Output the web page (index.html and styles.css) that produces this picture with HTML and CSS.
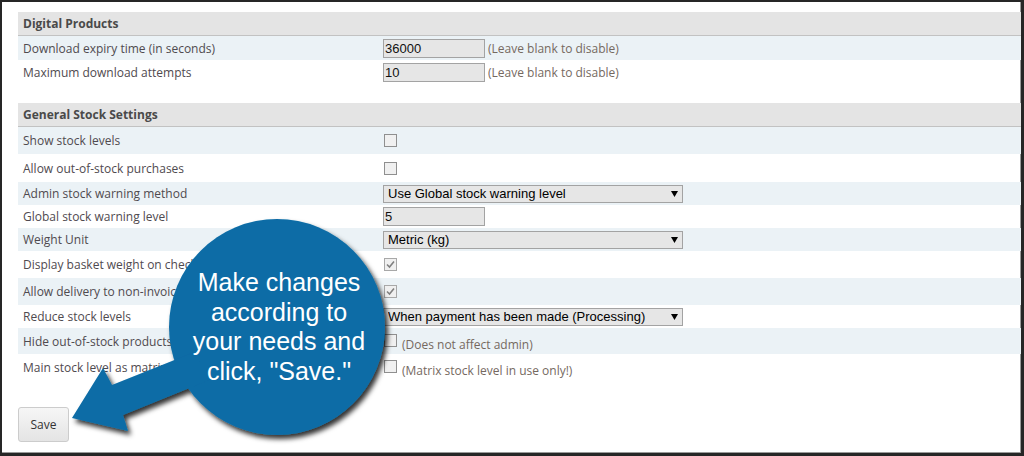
FILE: index.html
```html
<!DOCTYPE html>
<html>
<head>
    <title>Stock Settings</title>
    <link rel="stylesheet" href="styles.css">
</head>
<body>
    <div class="frame">
        <div class="settings">
            <div class="section">
                <div class="section-title">Digital Products</div>
                <div class="row mid alt">
                    <div class="label">Download expiry time (in seconds)</div>
                    <div class="field"><input class="text" type="text" value="36000"><span class="hint">(Leave blank to disable)</span></div>
                </div>
                <div class="row mid">
                    <div class="label">Maximum download attempts</div>
                    <div class="field"><input class="text" type="text" value="10"><span class="hint">(Leave blank to disable)</span></div>
                </div>
            </div>

            <div class="section">
                <div class="section-title">General Stock Settings</div>
                <div class="row tall alt">
                    <div class="label">Show stock levels</div>
                    <div class="field"><input class="check" type="checkbox"></div>
                </div>
                <div class="row roomy">
                    <div class="label">Allow out-of-stock purchases</div>
                    <div class="field"><input class="check" type="checkbox"></div>
                </div>
                <div class="row alt">
                    <div class="label">Admin stock warning method</div>
                    <div class="field">
                        <select class="pick">
                            <option>Use Global stock warning level</option>
                            <option>Use product stock warning level</option>
                        </select>
                    </div>
                </div>
                <div class="row">
                    <div class="label">Global stock warning level</div>
                    <div class="field"><input class="text" type="text" value="5"></div>
                </div>
                <div class="row alt">
                    <div class="label">Weight Unit</div>
                    <div class="field">
                        <select class="pick">
                            <option>Metric (kg)</option>
                            <option>Imperial (lb)</option>
                        </select>
                    </div>
                </div>
                <div class="row tall">
                    <div class="label">Display basket weight on checkout</div>
                    <div class="field"><input class="check" type="checkbox" checked></div>
                </div>
                <div class="row tall alt">
                    <div class="label">Allow delivery to non-invoice address</div>
                    <div class="field"><input class="check" type="checkbox" checked></div>
                </div>
                <div class="row">
                    <div class="label">Reduce stock levels</div>
                    <div class="field">
                        <select class="pick">
                            <option>When payment has been made (Processing)</option>
                            <option>When order is placed</option>
                        </select>
                    </div>
                </div>
                <div class="row snug alt">
                    <div class="label">Hide out-of-stock products</div>
                    <div class="field"><input class="check low" type="checkbox"><span class="hint note">(Does not affect admin)</span></div>
                </div>
                <div class="row tall">
                    <div class="label">Main stock level as matrix total</div>
                    <div class="field"><input class="check low" type="checkbox"><span class="hint note">(Matrix stock level in use only!)</span></div>
                </div>
            </div>

            <button class="save">Save</button>
        </div>

        <svg class="callout" width="1024" height="456" viewBox="0 0 1024 456">
            <defs>
                <filter id="shadow" x="-20%" y="-20%" width="140%" height="140%">
                    <feDropShadow dx="3" dy="4" stdDeviation="2.5" flood-color="#000" flood-opacity="0.8"/>
                </filter>
            </defs>
            <g filter="url(#shadow)" fill="#0a6ca6">
                <circle cx="277" cy="327" r="108"/>
                <polygon points="192,353 112,385 103,368 72,418 128,431 123,415 214,378"/>
            </g>
            <text class="callout-text" x="279" y="291">Make changes</text>
            <text class="callout-text" x="279" y="321">according to</text>
            <text class="callout-text" x="279" y="350">your needs and</text>
            <text class="callout-text" x="279" y="380">click, "Save."</text>
        </svg>
    </div>
</body>
</html>
```

FILE: styles.css
```css
body {
    margin: 0;
    background-color: #ffffff;
    font-family: "Open Sans", "Liberation Sans", sans-serif;
}
.frame {
    position: relative;
    width: 1024px;
    height: 456px;
    box-sizing: border-box;
    border: 2px solid #262626;
    border-right-width: 3px;
    border-bottom-width: 3px;
    box-shadow: inset -1px -1px 0 #9a9a9a;
    background-color: #ffffff;
    overflow: hidden;
}
.settings {
    padding: 10px 0 0 16px;
}
.section {
    margin-bottom: 19px;
}
.section-title {
    height: 23px;
    line-height: 24px;
    padding-left: 5px;
    background-color: #e4e4e4;
    border-bottom: 1px solid #c2c2c2;
    color: #4a4a4a;
    font-size: 12px;
    font-weight: 700;
}
.row {
    display: grid;
    grid-template-columns: 365px 1fr;
    align-items: center;
    height: 23px;
    font-size: 12px;
}
.row.mid {
    height: 24px;
}
.row.snug {
    height: 26px;
}
.row.tall {
    height: 27px;
}
.row.roomy {
    height: 28px;
}
.row.alt {
    background-color: #ebf2f6;
}
.label {
    padding-left: 5px;
    color: #4f4a4f;
    white-space: nowrap;
}
.field {
    display: flex;
    align-items: center;
}
.text {
    box-sizing: border-box;
    width: 102px;
    height: 19px;
    margin: 0;
    padding: 0 1px;
    background-color: #e6e6e6;
    border: 1px solid #a3a3a3;
    color: #111111;
    font-family: "Liberation Sans", Arial, sans-serif;
    font-size: 13px;
}
.hint {
    margin-left: 3px;
    color: #75695f;
}
.hint.note {
    margin-left: 5px;
    padding-top: 6px;
}
.check {
    -webkit-appearance: none;
    appearance: none;
    box-sizing: border-box;
    width: 13px;
    height: 13px;
    margin: 0 0 0 1px;
    background-color: #f0f0f0;
    border: 1px solid #8f8f8f;
}
.check:checked {
    border-color: #a8a8a8;
    background-image: url("data:image/svg+xml,%3Csvg xmlns='http://www.w3.org/2000/svg' width='11' height='11'%3E%3Cpath d='M2 5.5 L4.5 8 L9 2.5' fill='none' stroke='%23808080' stroke-width='1.6'/%3E%3C/svg%3E");
    background-repeat: no-repeat;
}
.check.low {
    margin-top: -2px;
}
.pick {
    -webkit-appearance: none;
    appearance: none;
    box-sizing: border-box;
    width: 300px;
    height: 18px;
    margin: 0;
    padding: 0 0 0 4px;
    background-color: #e6e6e6;
    background-image: url("data:image/svg+xml,%3Csvg xmlns='http://www.w3.org/2000/svg' width='7' height='6'%3E%3Cpolygon points='0,0 7,0 3.5,6' fill='%23000'/%3E%3C/svg%3E");
    background-repeat: no-repeat;
    background-position: right 4px center;
    border: 1px solid #a3a3a3;
    border-radius: 0;
    color: #000000;
    font-family: "Liberation Sans", Arial, sans-serif;
    font-size: 13px;
    line-height: 16px;
}
.save {
    display: block;
    width: 51px;
    height: 35px;
    margin-top: 26px;
    background: linear-gradient(#f6f6f6, #e4e4e4);
    border: 1px solid #cccccc;
    border-radius: 3px;
    color: #333333;
    font-family: "Open Sans", sans-serif;
    font-size: 12px;
}
.callout {
    position: absolute;
    left: -2px;
    top: -2px;
    pointer-events: none;
}
.callout-text {
    fill: #ffffff;
    font-family: "Liberation Sans", Arial, sans-serif;
    font-size: 25px;
    text-anchor: middle;
}
```
